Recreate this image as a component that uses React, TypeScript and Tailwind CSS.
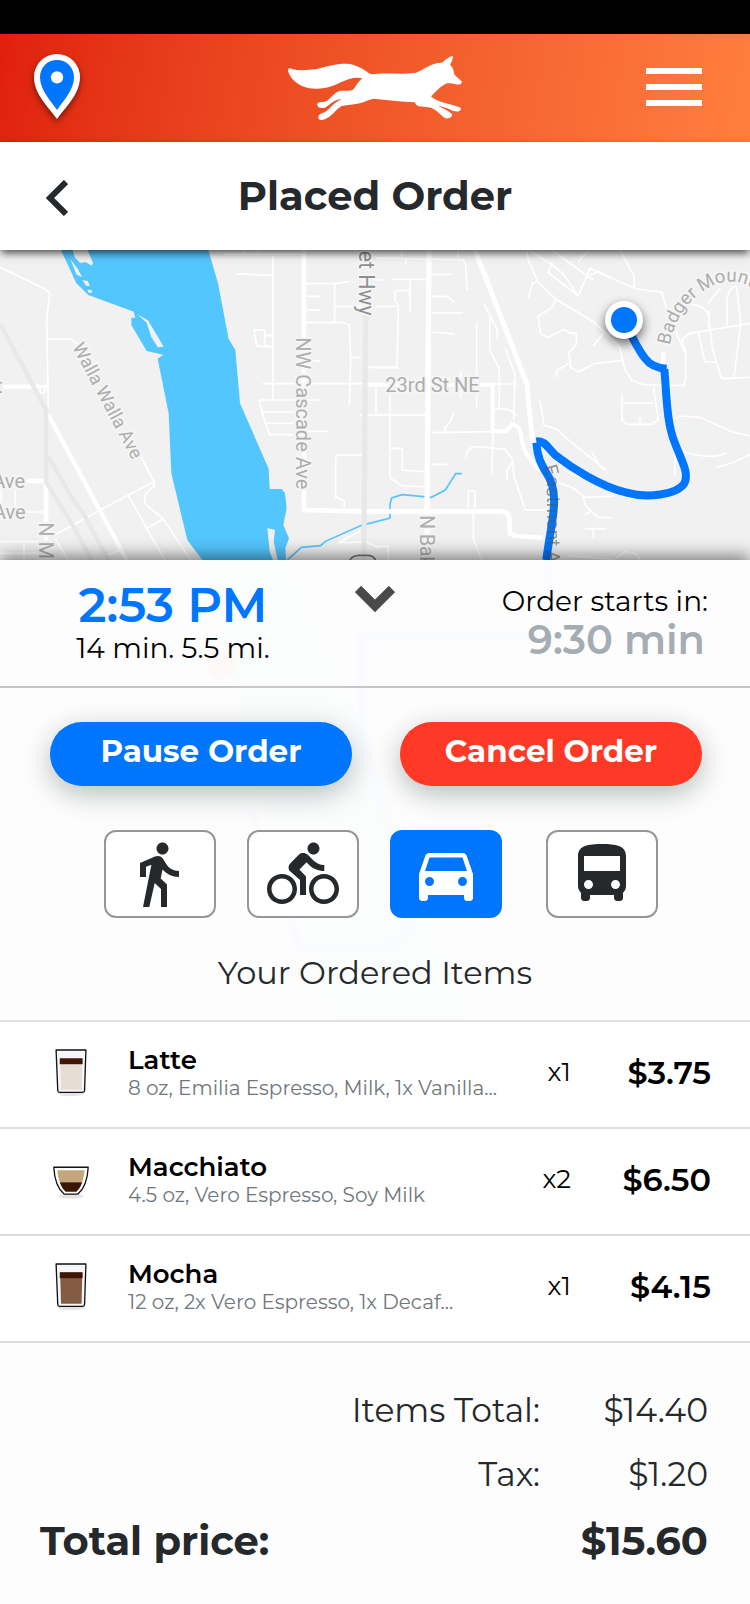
import { MdDirectionsBike, MdDirectionsBus, MdDirectionsCar, MdDirectionsWalk } from "react-icons/md";

type Drink = "latte" | "macchiato" | "mocha";

const items: { name: string; detail: string; qty: string; price: string; drink: Drink }[] = [
  { name: "Latte", detail: "8 oz, Emilia Espresso, Milk, 1x Vanilla...", qty: "x1", price: "$3.75", drink: "latte" },
  { name: "Macchiato", detail: "4.5 oz, Vero Espresso, Soy Milk", qty: "x2", price: "$6.50", drink: "macchiato" },
  { name: "Mocha", detail: "12 oz, 2x Vero Espresso, 1x Decaf...", qty: "x1", price: "$4.15", drink: "mocha" },
];

function PinIcon() {
  return (
    <svg viewBox="102 162 138 195" className="h-[65px] w-[46px] overflow-visible drop-shadow-[0_3px_3px_rgba(0,0,0,0.5)]" aria-hidden="true">
      <path d="M171 357C148 324 102 284 102 231a69 69 0 0 1 138 0c0 53-46 93-69 126z" fill="#fff" />
      <path d="M171 330C155 306 120 272 120 232c0-30 22-52 51-52s51 22 51 52c0 40-35 74-51 98z" fill="#0076ff" />
      <circle cx="171" cy="232" r="18.500" fill="#fff" />
    </svg>
  );
}

function FoxLogo() {
  return (
    <svg viewBox="0 -18 630 324" className="h-[108px] w-[210px]" role="img" aria-label="Fox">
      <path
        fill="#fff"
        d="M54 90C54 84 60 83 66 87C84 92 108 91 138 88C175 78 205 69 240 72C265 76 285 92 303 103C350 97 390 104 434 99C450 95 470 78 495 71C505 68 512 70 518 67C528 58 538 49 548 48C551 56 542 68 541 76C549 83 552 92 552 102C560 112 570 118 576 125C575 133 568 135 558 133C545 130 535 129 528 131C512 138 497 155 483 169C490 177 505 184 525 189C545 194 558 198 572 203C575 211 566 217 556 214C548 214 538 207 530 204C520 201 512 199 505 197C515 204 541 214 546 223C547 233 535 238 524 234C512 225 500 211 485 204C470 199 450 203 441 196C437 193 436 190 435 187C390 185 350 179 310 176C290 181 280 188 262 191C245 194 225 196 215 198C200 206 190 224 172 234C160 242 146 242 145 233C145 220 160 220 170 213C182 203 192 188 215 178C195 176 180 195 165 203C152 207 140 201 142 192C145 183 160 188 170 183C185 172 195 155 212 152C225 151 240 153 249 149C258 140 260 130 277 115C240 106 215 130 175 142C150 149 110 149 85 132C65 118 55 103 54 90Z"
      />
    </svg>
  );
}

function DrinkIcon({ kind }: { kind: Drink }) {
  if (kind === "macchiato") {
    return (
      <svg viewBox="0 -24 120 160" className="h-[53px] w-[40px] shrink-0 overflow-visible" aria-hidden="true">
        <ellipse cx="60" cy="106" rx="38" ry="8" fill="#000" opacity="0.100" />
        <path d="M8 19h104c-2 37-12 65-31 81H39C20 84 10 56 8 19z" fill="#fff" stroke="#111" strokeWidth="4" strokeLinejoin="round" />
        <path d="M19 28h82c-1 14-4 25-7 36H26c-4-11-6-22-7-36z" fill="#c4a67c" />
        <path d="M26 64h68c-5 14-11 22-18 29H44c-7-7-13-15-18-29z" fill="#3a1605" />
      </svg>
    );
  }
  return (
    <svg viewBox="0 0 120 160" className="h-[53px] w-[40px] shrink-0 overflow-visible" aria-hidden="true">
      <ellipse cx="60" cy="144" rx="38" ry="8" fill="#000" opacity="0.100" />
      <path d="M15 12h90l-4 122q0 5-6 6H26q-6-1-6-6z" fill="#f5f6fa" stroke="#111" strokeWidth="4" strokeLinejoin="round" />
      <path d="M27 38h67l-2 94H30z" fill={kind === "latte" ? "#e6ddd4" : "#845c41"} />
      <path d="M26 37h69v18H26z" fill="#3f1605" />
    </svg>
  );
}

const roadLabel = {
  fontFamily: "Roboto, sans-serif",
  fill: "#adadad",
  stroke: "#f5f5f5",
  strokeWidth: 12,
  paintOrder: "stroke" as const,
  strokeLinejoin: "round" as const,
};

function RouteMap() {
  return (
    <svg viewBox="0 30 2250 930" preserveAspectRatio="xMidYMid slice" className="block h-[310px] w-full bg-[#f1f1f1]" role="img" aria-label="Delivery route map">
      {/* West bank streets */}
      <g fill="none" stroke="#fff" strokeWidth="5">
        <path d="M0 82L135 147L150 159L140 235L145 500M145 297H215L240 320M420 645L462 725V738L436 762L434 790L490 837L572 960M160 887L310 805L462 725M385 767L440 865L495 960M440 865L490 837M165 895L205 960M0 905H160M72 905V960M46 750V816H130M4 740V816M0 940H130" />
        <path d="M310 948L370 928M118 438H140V430M120 442V458H134V440z" />
        <path d="M145 525L380 960" strokeWidth="13" />
        <path d="M10 440H118M70 723H135" strokeWidth="13" />
        <path d="M138 720V960" strokeWidth="14" />
      </g>
      <g fill="none" stroke="#e8e8e8" strokeWidth="13">
        <path d="M0 250L138 510V725L215 850L275 960M145 650L220 780L250 820L325 960" />
      </g>
      {/* River */}
      <path
        fill="#54c6fe"
        d="M183 30H625L654 130L686 297L706 330L720 490L806 686L809 747H845L855 760L860 805L850 855L867 895L856 925L858 960H607L562 900L514 700L506 520L473 356L490 344L440 333L394 255V233H406L401 215L265 165L229 130z"
      />
      <path fill="#f1f1f1" d="M218 30H263L279 70L275 77L258 67L240 68L224 52zM211 57L234 88L246 112L229 103zM247 120L263 123L270 137L259 138zM262 150L273 149L278 157L266 159zM411 222L445 242L491 320L473 322L454 291L440 248zM802 864L825 870L821 905L833 960H819L809 935z" />
      <path d="M862 960L904 922L962 917L976 904L1085 856L1170 834V793L1175 774L1206 764L1294 772L1336 750L1367 701H1385" fill="none" stroke="#54c6fe" strokeWidth="5" />
      {/* East bank streets */}
      <g fill="none" stroke="#fff" strokeWidth="5">
        <path d="M675 42H910M732 30V45M775 30V45M819 48V478M708 101L815 106M918 131H1005L1047 124M1004 131V247M918 169H960M918 209L960 211M918 247L1030 248L1048 255L1052 360L1048 497M1052 352H1082M1004 200H1090M762 270H794V318L820 321L770 318zM794 287H819M788 431H1200M918 363H960M777 480H962M777 480L790 530L809 584H905M783 516H905M798 550H905M918 574H985M1080 525H1280M1087 645H1018Q1007 645 1007 658V771L1033 782V805M1100 382H1190M1015 908L1080 874M1015 908L1100 906L1140 925" />
        <path d="M912 30V810L1090 814H1500Q1527 814 1529 840V880L1543 887L1630 894" strokeWidth="14" />
        <path d="M1100 434H1478V574H1518L1538 552Q1562 560 1564 590Q1566 640 1620 690" strokeWidth="12" />
        <path d="M1287 30L1280 960" strokeWidth="16" />
        <path d="M1425 30L1580 430L1600 620" strokeWidth="15" />
        <path d="M1130 54L1390 60L1397 75L1401 150M1205 30V50M1217 55V76M1375 30V55M1130 120H1155M1175 118H1285M1230 118V218M1184 152H1230M1185 152V180L1195 198L1191 383H1125M1130 199H1190M1295 103H1357M1295 169H1340L1363 186M1295 219H1388M1295 276L1363 282M1430 245V505M1382 392V475M1452 190L1492 270V298M1470 235L1469 330L1498 386V505M1516 325L1545 404L1541 540M1360 432H1550M1129 524H1278M1170 430V714L1207 738L1275 740M1128 430V524M1361 515L1352 545L1335 562V575M1295 578L1475 575M1478 505L1525 508L1550 525M1396 656Q1402 618 1430 620L1515 628L1538 660L1542 710L1576 810H1635M1479 580L1475 705M1521 720V690L1538 665M1172 625H1207V690L1280 696M1295 673H1342M1405 804V753H1425V804M1420 814V895L1445 960M1165 915V960M1125 919H1162" />
        <path d="M1580 30L1585 60L1612 123L1668 178L1780 245L1858 320L1875 390L1895 420L1930 434L2050 437L2057 420V330L2046 298L2070 280L2250 250M1595 36L1650 70L1690 102L1735 168L1770 85L1825 110L1910 147L1985 156L2000 208L2055 340M1735 168L1645 98L1657 65M1612 123L1598 130L1585 175M1668 178L1656 202L1614 230L1622 282L1645 293L1690 268L1708 278L1728 280L1730 312L1706 338L1712 382L1735 396L1785 370L1865 362M1706 370L1670 392V412M1780 318L1810 280M1655 30L1780 120M1860 30L1903 110V145M1768 105L1798 94L1832 115M1735 65L1765 30M2064 190Q2130 200 2127 240L2138 330L2165 416L2250 412M2096 278L2114 366H2150M2182 260L2180 180Q2190 135 2210 140L2222 250L2202 414M2127 265V210M2160 145L2125 190M1620 480L1632 555L1670 568L1700 595L1820 692L1800 680L1775 635M1866 460V540L1880 553H1955L1975 540L1960 440M1866 489H1960M1920 533V553M2010 545L2040 528L2100 532L2195 575L2250 588M2025 580V705M2050 636Q2140 660 2180 638M2150 683Q2210 666 2250 643" />
        <path d="M1660 720L1720 745L1755 772L1840 768V750L1690 690M1750 770L1755 795L1795 833H1835M1755 825L1775 810M1755 866H1820M1780 866V894M1705 948L1775 952L1845 960M1848 955L1875 935L1910 942L1920 960" />
      </g>
      <path d="M1097 215L1092 960" fill="none" stroke="#e8e8e8" strokeWidth="15" />
      <path d="M1050 960Q1056 947 1078 946H1102Q1120 946 1127 960" fill="none" stroke="#777" strokeWidth="5" />
      {/* Road labels */}
      <g style={roadLabel} fontSize="60">
        <text transform="translate(216 320) rotate(62)" fontSize="55">Walla Walla Ave</text>
        <text transform="translate(889 292) rotate(90)">NW Cascade Ave</text>
        <text transform="translate(118 847) rotate(90)">N Miller St</text>
        <text transform="translate(1077 32) rotate(90)" fontSize="64" style={{ fill: "#8e8e8e" }}>et Hwy</text>
        <text transform="translate(1259 826) rotate(90)" fontSize="58">N Baker</text>
        <text x="1156" y="455">23rd St NE</text>
        <text x="75" y="743" textAnchor="end">Ave</text>
        <text x="77" y="837" textAnchor="end">Ave</text>
        <text x="8" y="459" textAnchor="end">st</text>
        <path d="M1990 390V335" stroke="#fff" strokeWidth="13" fill="none" />
        <path id="badger-road" d="M2010 316C2018 250 2060 185 2105 158C2150 122 2205 112 2260 145C2310 170 2350 200 2400 240" fill="none" stroke="none" />
        <text fontSize="56">
          <textPath href="#badger-road">Badger Mountain</textPath>
        </text>
      </g>
      {/* Route */}
      <g fill="none" stroke="#0076ff" strokeWidth="24">
        <path d="M1871 240C1895 290 1915 330 1935 355Q1957 384 2000 386" />
        <path d="M1993 387C2000 470 2000 550 2025 610C2046 665 2068 700 2053 730C2030 765 1940 775 1880 758C1800 740 1710 680 1668 647C1645 627 1635 600 1609 604" />
        <path d="M1609 608C1612 650 1622 670 1640 700C1685 765 1650 860 1639 960" />
      </g>
      <path id="eastmont-road" d="M1630 680C1642 705 1640 735 1640 760V1100" fill="none" />
      <text fontFamily="Roboto, sans-serif" fontSize="56" fill="#555" opacity="0.600">
        <textPath href="#eastmont-road">Eastmont Ave</textPath>
      </text>
      <circle cx="1872" cy="254" r="57" fill="#000" className="opacity-60 blur-[16px]" />
      <circle cx="1872" cy="240" r="57" fill="#fff" />
      <circle cx="1872" cy="240" r="39" fill="#0076ff" />
    </svg>
  );
}

function SheetBackdrop() {
  return (
    <svg viewBox="0 0 750 460" preserveAspectRatio="xMidYMin slice" className="absolute inset-x-0 top-0 h-[460px] w-full opacity-60" aria-hidden="true">
      <path d="M205 0H288L340 110L400 270L470 460H330L250 200z" fill="#fafdfd" />
      <path d="M548 0V76H362V180Q385 260 410 350Q408 387 380 387H300L250 250" fill="none" stroke="#f7faff" strokeWidth="8" />
      <circle cx="222" cy="105" r="15" fill="#fff8f7" />
    </svg>
  );
}

const modeIdle = "flex h-[88px] w-28 items-center justify-center rounded-xl border-2 border-[#969696] bg-white text-[72px] text-[#25292c]";

export default function App() {
  return (
    <div className="min-h-screen bg-[#fdfdfd] font-normal text-black [font-family:Montserrat,Inter,sans-serif]">
      <div className="h-[34px] bg-black" />
      <header className="grid h-[108px] grid-cols-[1fr_210px_1fr] items-center bg-linear-100 from-[#e01f0d] to-[#ff7e3f] pr-12 pl-[34px]">
        <button type="button" aria-label="Location" className="w-[46px] justify-self-start pb-[3px]">
          <PinIcon />
        </button>
        <div className="justify-self-center pl-[14px]">
          <FoxLogo />
        </div>
        <button type="button" aria-label="Menu" className="flex w-[56px] flex-col gap-[10px] justify-self-end pb-[2px]">
          <span className="h-[6px] bg-white" />
          <span className="h-[6px] bg-white" />
          <span className="h-[6px] bg-white" />
        </button>
      </header>
      <div className="relative z-10 grid h-[108px] grid-cols-[68px_1fr_68px] items-center bg-white shadow-[0_4px_8px_-1px_rgba(0,0,0,0.7)]">
        <button type="button" aria-label="Back" className="justify-self-end">
          <svg viewBox="0 0 22 36" className="mt-1 h-9 w-[22px]" fill="none" stroke="#25292c" strokeWidth="6" aria-hidden="true">
            <path d="M20 2L4 18l16 16" />
          </svg>
        </button>
        <h1 className="text-center text-[40px] leading-none font-bold text-[#25292c]">Placed Order</h1>
      </div>

      <main>
        <RouteMap />
        <div className="relative bg-[#fdfdfd] shadow-[0_-4px_16px_0_rgba(0,0,0,0.5)]">
          <SheetBackdrop />
          <section className="relative grid h-32 grid-cols-[1fr_40px_1fr] border-b-2 border-[#c5c5ca]">
            <div className="w-[270px] pt-5 pl-[76px] text-center">
              <p className="text-[48px] leading-[50px] font-semibold whitespace-nowrap text-[#0076ff]">2:53 PM</p>
              <p className="text-[28px] leading-[36px] whitespace-nowrap">14 min. 5.5 mi.</p>
            </div>
            <button type="button" aria-label="Collapse details" className="self-start pt-[26px]">
              <svg viewBox="0 0 40 28" className="h-7 w-10" fill="none" stroke="#4a4a4a" strokeWidth="9" aria-hidden="true">
                <path d="M3 3l17 17L37 3" />
              </svg>
            </button>
            <div className="pt-6 pr-[42px] text-right">
              <p className="text-[28px] leading-[34px] whitespace-nowrap">Order starts in:</p>
              <p className="pr-[3px] text-[40px] leading-[44px] font-semibold whitespace-nowrap text-[#a5adb3]">9:30 min</p>
            </div>
          </section>

          <section className="relative grid grid-cols-2 gap-12 pt-[34px] pr-12 pl-[50px] text-[31px] font-bold text-white">
            <button type="button" className="h-16 rounded-full bg-[#0076ff] pb-[6px] shadow-[0_8px_28px_rgba(0,20,20,0.28)]">Pause Order</button>
            <button type="button" className="h-16 rounded-full bg-[#ff3925] pb-[6px] shadow-[0_8px_28px_rgba(0,20,20,0.28)]">Cancel Order</button>
          </section>

          <section className="relative flex justify-center gap-11 pt-11 pl-3" aria-label="Travel mode">
            <div className="flex gap-[31px]">
              <button type="button" aria-label="Walk" className={modeIdle}>
                <MdDirectionsWalk className="mr-1" />
              </button>
              <button type="button" aria-label="Bike" className={modeIdle}>
                <MdDirectionsBike />
              </button>
              <button type="button" aria-label="Car" aria-pressed="true" className="flex h-[88px] w-28 items-center justify-center rounded-xl bg-[#0076ff] text-[72px] text-white">
                <MdDirectionsCar />
              </button>
            </div>
            <button type="button" aria-label="Bus" className={modeIdle}>
              <MdDirectionsBus />
            </button>
          </section>

          <section className="relative">
            <h2 className="pt-[33px] pb-[25px] text-center text-[32px] leading-[44px] text-[#25292c]">Your Ordered Items</h2>
            <ul className="border-t-2 border-[#dfe0e4] bg-white">
              {items.map((item) => (
                <li key={item.name} className="flex h-[107px] items-center border-b-2 border-[#dcdce1] pr-[39px] pb-[4px] pl-[51px]">
                  <DrinkIcon kind={item.drink} />
                  <div className="min-w-0 flex-1 pl-[37px]">
                    <p className="text-[26px] leading-[30px] font-semibold">{item.name}</p>
                    <p className="text-[20px] leading-[26px] whitespace-nowrap text-[#70777c]">{item.detail}</p>
                  </div>
                  <p className="w-12 text-right text-[26px]">{item.qty}</p>
                  <p className="w-[140px] text-right text-[32px] font-semibold">{item.price}</p>
                </li>
              ))}
            </ul>
          </section>

          <dl className="grid grid-cols-[1fr_168px] pt-[35px] pr-[42px] pb-7 pl-10 text-right text-[33px] leading-[64px] text-[#25292c]">
            <dt>Items Total:</dt>
            <dd>$14.40</dd>
            <dt>Tax:</dt>
            <dd>$1.20</dd>
            <dt className="text-left text-[40px] leading-[70px] font-bold">Total price:</dt>
            <dd className="text-[40px] leading-[70px] font-bold">$15.60</dd>
          </dl>
        </div>
      </main>
    </div>
  );
}
